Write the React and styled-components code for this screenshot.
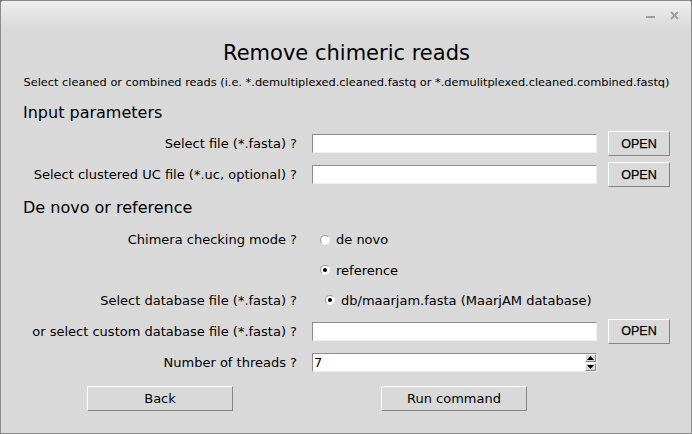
import React from 'react'
import styled, { createGlobalStyle } from 'styled-components'

const GlobalStyle = createGlobalStyle`
  html, body {
    margin: 0;
    padding: 0;
    background: #5c5c5c;
  }
  body {
    font-family: "DejaVu Sans", sans-serif;
  }
`

const Window = styled.div`
  width: 692px;
  height: 434px;
  box-sizing: border-box;
  border: 1px solid #8a8a8a;
  border-radius: 3px 3px 0 0;
  background: #d9d9d9;
  display: flex;
  flex-direction: column;
  overflow: hidden;
  font-family: "DejaVu Sans", sans-serif;
  color: #000;
`

const TitleBar = styled.div`
  height: 29px;
  flex: none;
  background: linear-gradient(#eeeeee, #d9d9d9);
  display: flex;
  justify-content: flex-end;
  align-items: center;
  gap: 15px;
  padding-right: 12px;
`

const Minimize = styled.div`
  width: 9px;
  height: 2px;
  background: #9c9c9c;
  margin-top: 2px;
`

const Content = styled.div`
  display: flex;
  flex-direction: column;
  padding: 0 21px 0 22px;
`

const Title = styled.h1`
  margin: 0;
  height: 45px;
  display: flex;
  align-items: center;
  justify-content: center;
  font-size: 21px;
  font-weight: normal;
`

const Subtitle = styled.div`
  height: 14px;
  line-height: 14px;
  font-size: 11.35px;
  text-align: center;
  white-space: nowrap;
`

const Heading = styled.h2`
  margin: ${({ $top }) => $top || 0}px 0 0;
  height: ${({ $h }) => $h}px;
  display: flex;
  align-items: center;
  font-size: 16px;
  font-weight: normal;
`

const Row = styled.div`
  display: flex;
  align-items: center;
  height: ${({ $h }) => $h || 31}px;
`

const Label = styled.div`
  width: 274px;
  margin-right: 15px;
  text-align: right;
  font-size: 13px;
  white-space: nowrap;
`

const Entry = styled.div`
  width: 285px;
  height: 19px;
  box-sizing: border-box;
  background: #fff;
  border-top: 1px solid #8c8c8c;
  border-left: 1px solid #8c8c8c;
  border-bottom: 1px solid #efefef;
  border-right: 1px solid #efefef;
  display: flex;
  align-items: center;
  font-size: 13px;
  padding-left: 1px;
  position: relative;
`

const OpenButton = styled.button`
  margin-left: 11px;
  width: 62px;
  height: 25px;
  box-sizing: border-box;
  background: #d9d9d9;
  border-top: 1px solid #fff;
  border-left: 1px solid #fff;
  border-bottom: 1px solid #858585;
  border-right: 1px solid #858585;
  font-family: "Liberation Sans", Arial, sans-serif;
  font-size: 12.5px;
  color: #000;
  padding: 0;
  -webkit-text-stroke: 0.25px #000;
`

const RadioOption = styled.label`
  display: flex;
  align-items: center;
  gap: 6px;
  padding-left: ${({ $indent }) => $indent}px;
  font-size: 13px;
`

const RadioDot = styled.span`
  width: 10px;
  height: 10px;
  box-sizing: border-box;
  border-radius: 50%;
  background: #fff;
  border: 1px solid;
  border-color: #9a9a9a #f4f4f4 #f4f4f4 #9a9a9a;
  display: flex;
  align-items: center;
  justify-content: center;
  &::after {
    content: "";
    width: 4px;
    height: 4px;
    border-radius: 50%;
    background: ${({ $on }) => ($on ? '#000' : 'transparent')};
  }
`

const SpinArrows = styled.div`
  position: absolute;
  right: 0;
  top: 0;
  display: flex;
  flex-direction: column;
  gap: 1px;
`

const SpinButton = styled.div`
  width: 11px;
  height: 8px;
  box-sizing: border-box;
  background: #d9d9d9;
  border-top: 1px solid #fff;
  border-left: 1px solid #fff;
  border-bottom: 1px solid #858585;
  border-right: 1px solid #858585;
  display: flex;
  align-items: center;
  justify-content: center;
`

const ButtonBar = styled.div`
  display: flex;
  gap: 148px;
  padding-left: 64px;
  margin-top: 8px;
`

const ActionButton = styled.button`
  width: 146px;
  height: 25px;
  box-sizing: border-box;
  background: #d9d9d9;
  border-top: 1px solid #fff;
  border-left: 1px solid #fff;
  border-bottom: 1px solid #858585;
  border-right: 1px solid #858585;
  font-family: "DejaVu Sans", sans-serif;
  font-size: 13px;
  color: #000;
  padding: 0;
`

const Close = () => (
  <svg width="9" height="9" viewBox="0 0 9 9">
    <path d="M1 1 L8 8 M8 1 L1 8" stroke="#a0a0a0" strokeWidth="2" />
  </svg>
)

const Tri = ({ up }) => (
  <svg width="7" height="4" viewBox="0 0 7 4">
    <path d={up ? 'M0 4 L3.5 0 L7 4 Z' : 'M0 0 L3.5 4 L7 0 Z'} fill="#000" />
  </svg>
)

const FileRow = ({ label }) => (
  <Row>
    <Label>{label}</Label>
    <Entry />
    <OpenButton>OPEN</OpenButton>
  </Row>
)

const RadioRow = ({ label, text, on, indent, h }) => (
  <Row $h={h || 30}>
    <Label>{label}</Label>
    <RadioOption $indent={indent}>
      <RadioDot $on={on} />
      {text}
    </RadioOption>
  </Row>
)

export default function App() {
  return (
    <Window>
      <GlobalStyle />
      <TitleBar>
        <Minimize />
        <Close />
      </TitleBar>
      <Content>
        <Title>Remove chimeric reads</Title>
        <Subtitle>
          Select cleaned or combined reads (i.e. *.demultiplexed.cleaned.fastq or *.demulitplexed.cleaned.combined.fastq)
        </Subtitle>
        <Heading $top={7} $h={32}>Input parameters</Heading>
        <FileRow label="Select file (*.fasta) ?" />
        <FileRow label="Select clustered UC file (*.uc, optional) ?" />
        <Heading $h={34}>De novo or reference</Heading>
        <RadioRow label="Chimera checking mode ?" text="de novo" indent={8} h={31} />
        <RadioRow label="" text="reference" on indent={8} />
        <RadioRow label="Select database file (*.fasta) ?" text="db/maarjam.fasta (MaarjAM database)" on indent={13} />
        <Row $h={32}>
          <Label>or select custom database file (*.fasta) ?</Label>
          <Entry />
          <OpenButton>OPEN</OpenButton>
        </Row>
        <Row>
          <Label>Number of threads ?</Label>
          <Entry>
            7
            <SpinArrows>
              <SpinButton><Tri up /></SpinButton>
              <SpinButton><Tri /></SpinButton>
            </SpinArrows>
          </Entry>
        </Row>
        <ButtonBar>
          <ActionButton>Back</ActionButton>
          <ActionButton>Run command</ActionButton>
        </ButtonBar>
      </Content>
    </Window>
  )
}
